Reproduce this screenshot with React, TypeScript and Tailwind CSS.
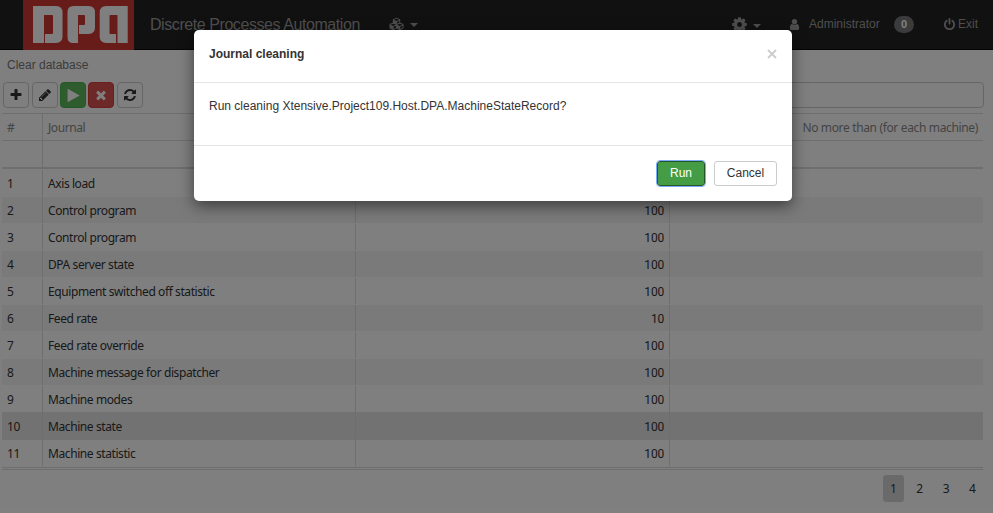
import React from "react";
import { FaCubes } from "react-icons/fa";

const ICONS = {
  plus: "M1600 736v192q0 40-28 68t-68 28h-416v416q0 40-28 68t-68 28h-192q-40 0-68-28t-28-68v-416h-416q-40 0-68-28t-28-68v-192q0-40 28-68t68-28h416v-416q0-40 28-68t68-28h192q40 0 68 28t28 68v416h416q40 0 68 28t28 68z",
  times: "M1490 1322q0 40-28 68l-136 136q-28 28-68 28t-68-28l-294-294-294 294q-28 28-68 28t-68-28l-136-136q-28-28-28-68t28-68l294-294-294-294q-28-28-28-68t28-68l136-136q28-28 68-28t68 28l294 294 294-294q28-28 68-28t68 28l136 136q28 28 28 68t-28 68l-294 294 294 294q28 28 28 68z",
  pencil: "M491 1536l91-91-235-235-91 91v107h128v128h107zm523-928q0-22-22-22-10 0-17 7l-542 542q-7 7-7 17 0 22 22 22 10 0 17-7l542-542q7-7 7-17zm-54-192l416 416-832 832h-416v-416zm683 96q0 53-37 90l-166 166-416-416 166-165q36-38 90-38 53 0 91 38l235 234q37 39 37 91z",
  play: "M1576 927l-1328 738q-23 13-39.5 3t-16.5-36v-1472q0-26 16.5-36t39.5 3l1328 738q23 13 23 31t-23 31z",
  refresh: "M1639 1056q0 5-1 7-64 268-268 434.5t-478 166.5q-146 0-282.5-55t-243.5-157l-129 129q-19 19-45 19t-45-19-19-45v-448q0-26 19-45t45-19h448q26 0 45 19t19 45-19 45l-137 137q71 66 161 102t187 36q134 0 250-65t186-179q11-17 53-117 8-23 30-23h192q13 0 22.5 9.5t9.5 22.5zm25-800v448q0 26-19 45t-45 19h-448q-26 0-45-19t-19-45 19-45l138-138q-148-137-349-137-134 0-250 65t-186 179q-11 17-53 117-8 23-30 23h-199q-13 0-22.5-9.5t-9.5-22.5v-7q65-268 270-434.5t480-166.5q146 0 284 55.5t245 156.5l130-129q19-19 45-19t45 19 19 45z",
  cog: "M1152 896q0-106-75-181t-181-75-181 75-75 181 75 181 181 75 181-75 75-181zm512-109v222q0 12-8 23t-20 13l-185 28q-19 54-39 91 35 50 107 138 10 12 10 25t-9 23q-27 37-99 108t-94 71q-12 0-26-9l-138-108q-44 23-91 38-16 136-29 186-7 28-36 28h-222q-14 0-24.5-8.5t-11.5-21.5l-28-184q-49-16-90-37l-141 107q-10 9-25 9-14 0-25-11-126-114-165-168-7-10-7-23 0-12 8-23 15-21 51-66.5t54-70.5q-27-50-41-99l-183-27q-13-2-21-12.5t-8-23.5v-222q0-12 8-23t19-13l186-28q14-46 39-92-40-57-107-138-10-12-10-24 0-10 9-23 26-36 98.5-107.5t94.5-71.5q13 0 26 10l138 107q44-23 91-38 16-136 29-186 7-28 36-28h222q14 0 24.5 8.5t11.5 21.5l28 184q49 16 90 37l142-107q9-9 24-9 13 0 25 10 129 119 165 170 7 8 7 22 0 12-8 23-15 21-51 66.5t-54 70.5q26 50 41 98l183 28q13 2 21 12.5t8 23.5z",
  power: "M1664 896q0 156-61 298t-164 245-245 164-298 61-298-61-245-164-164-245-61-298q0-182 80.5-343t226.5-270q43-32 95.5-25t83.5 50q32 42 24.5 94.5t-49.5 84.5q-98 74-151.5 181t-53.5 228q0 104 40.5 198.5t109.5 163.5 163.5 109.5 198.5 40.5 198.5-40.5 163.5-109.5 109.5-163.5 40.5-198.5q0-121-53.5-228t-151.5-181q-42-32-49.5-84.5t24.5-94.5q31-43 84-50t95 25q146 109 226.5 270t80.5 343zm-640-768v640q0 52-38 90t-90 38-90-38-38-90v-640q0-52 38-90t90-38 90 38 38 90z",
  user: "M1536 1399q0 109-62.5 187t-150.5 78h-854q-88 0-150.5-78t-62.5-187q0-85 8.5-160.5t31.5-152 58.5-131 94-89 134.5-34.5q131 128 313 128t313-128q76 0 134.5 34.5t94 89 58.5 131 31.5 152 8.5 160.5zm-256-887q0 159-112.5 271.5t-271.5 112.5-271.5-112.5-112.5-271.5 112.5-271.5 271.5-112.5 271.5 112.5 112.5 271.5z",
};

function Icon({ name, className }: { name: keyof typeof ICONS; className: string }) {
  return (
    <svg viewBox="0 0 1792 1792" fill="currentColor" className={"shrink-0 " + className}>
      <path d={ICONS[name]} />
    </svg>
  );
}

function Caret({ className = "" }: { className?: string }) {
  return <span className={"h-0 w-0 border-x-4 border-t-4 border-x-transparent border-t-current " + className} />;
}

function Logo() {
  return (
    <svg viewBox="0 0 111 50" className="ml-[23px] h-[50px] w-[111px] shrink-0">
      <rect width="111" height="50" fill="#cf3832" />
      <g fill="#fff">
        <path d="M10 6h23q6.500 0 6.500 6.500v24q0 6.500-6.500 6.500H22V34h7q1 0 1-1V16q0-1-1-1h-8v28H10z" />
        <path d="M44.500 12q0-6 6-6h15q6.500 0 6.500 6.500v15q0 6.500-6.500 6.500H56V25h5q1 0 1-1v-8q0-1-1-1h-6v28h-5q-5.500 0-5.500-6z" />
        <path d="M76.700 12.500q0-6.500 6.500-6.500h21.500v37H94.500V15h-7q-1 0-1 1v17q0 1 1 1H93v9h-9.800q-6.500 0-6.500-6.500z" />
      </g>
    </svg>
  );
}

const ROWS: [string, string][] = [
  ["Axis load", "100"],
  ["Control program", "100"],
  ["Control program", "100"],
  ["DPA server state", "100"],
  ["Equipment switched off statistic", "100"],
  ["Feed rate", "10"],
  ["Feed rate override", "100"],
  ["Machine message for dispatcher", "100"],
  ["Machine modes", "100"],
  ["Machine state", "100"],
  ["Machine statistic", "100"],
];

const SELECTED = 9;

function rowColors(i: number) {
  if (i === SELECTED) return "border-[#e5e5e5] bg-[#e5e5e5]";
  if (i === SELECTED - 1) return "border-[#e5e5e5]";
  return i % 2 ? "border-white bg-[#f5f5f5]" : "border-white";
}

const GRID = "grid grid-cols-[40px_313px_314px_1fr]";
const CELL = "flex items-center border-l border-[#ddd]";

function ToolButton({ className, children }: { className: string; children: React.ReactNode }) {
  return <button className={"flex h-[26px] w-[26px] items-center justify-center rounded border " + className}>{children}</button>;
}

function Header() {
  return (
    <header className="flex h-[50px] border-b border-[#080808] bg-[#222] text-xs text-[#9d9d9d]">
      <Logo />
      <span className="ml-4 w-[239px] whitespace-nowrap pt-[14px] text-base leading-[22px] tracking-[-0.43px]">Discrete Processes Automation</span>
      <div className="mt-[18px] flex h-3 items-center">
        <FaCubes className="h-[14px] w-[15px]" />
        <Caret className="ml-[6px] mt-px" />
      </div>
      <div className="ml-auto flex h-[48px] items-center pr-[14px]">
        <Icon name="cog" className="h-[17px] w-[17px]" />
        <Caret className="ml-[5px] mt-1" />
        <Icon name="user" className="ml-[27px] h-[13px] w-[13px]" />
        <span className="ml-2 w-[72px] whitespace-nowrap">Administrator</span>
        <span className="ml-[13px] flex h-[17px] w-5 items-center justify-center rounded-full bg-[#777] text-[11px] font-bold text-white">0</span>
        <Icon name="power" className="ml-[29px] h-[13px] w-[13px]" />
        <span className="ml-[2px] w-[21px] whitespace-nowrap">Exit</span>
      </div>
    </header>
  );
}

function Modal() {
  return (
    <div className="absolute left-[194px] top-[30px] flex h-[171px] w-[598px] flex-col rounded-[5px] bg-white text-xs text-[#333] shadow-[0_5px_15px_rgba(0,0,0,0.5)]">
      <div className="flex h-[53px] items-center justify-between border-b border-[#e5e5e5] px-[15px] pb-1">
        <h4 className="font-bold">Journal cleaning</h4>
        <svg viewBox="0 0 10 10" className="h-[10px] w-[10px]" stroke="#ccc" strokeWidth="1.800"><path d="M1 1l8 8M9 1l-8 8" /></svg>
      </div>
      <div className="h-[62px] px-[15px] pt-[14px] leading-[18px]">
        Run cleaning Xtensive.Project109.Host.DPA.MachineStateRecord?
      </div>
      <div className="flex flex-1 justify-end gap-[9px] border-t border-[#e5e5e5] px-[15px] pt-[15px]">
        <button className="h-[25px] w-[48px] rounded-[3px] border border-[#255625] bg-[#449d44] pb-px text-white outline-1 outline-[#7daafa]">Run</button>
        <button className="h-[25px] w-[63px] rounded-[3px] border border-[#ccc] pb-px">Cancel</button>
      </div>
    </div>
  );
}

export default function App() {
  return (
    <div className="relative h-[513px] w-[993px] overflow-hidden bg-white font-['Liberation_Sans',Arial,sans-serif]">
      <Header />
      <main>
        <h1 className="h-8 pl-[7px] pt-[6px] text-xs leading-[18px] text-[#777]">Clear database</h1>
        <div className="flex h-[31px] gap-[2px] pl-[3px] pr-[9px] text-[#333]">
          <ToolButton className="border-[#ccc]"><Icon name="plus" className="h-[14px] w-[14px]" /></ToolButton>
          <ToolButton className="ml-px border-[#ccc]"><Icon name="pencil" className="h-[14px] w-[14px]" /></ToolButton>
          <ToolButton className="border-[#4cae4c] bg-[#5cb85c] text-white"><Icon name="play" className="h-[15px] w-[15px]" /></ToolButton>
          <ToolButton className="border-[#d43f3a] bg-[#d9534f] text-white"><Icon name="times" className="h-[14px] w-[14px]" /></ToolButton>
          <ToolButton className="ml-px border-[#ccc]"><Icon name="refresh" className="h-[14px] w-[14px]" /></ToolButton>
          <div className="ml-[80px] h-[26px] flex-1 rounded border border-[#ccc]" />
        </div>
        <section className="ml-[2px] w-[981px] border-t border-[#ddd] font-['Noto_Sans',sans-serif] text-xs tracking-[-0.41px] text-[#333]">
          <div className={GRID + " h-[27px] border-b border-[#ddd] text-[#888]"}>
            <span className="flex items-center pl-[5px] pt-[2px]">#</span>
            <span className={CELL + " pl-[5px] pt-[2px]"}>Journal</span>
            <span className={CELL} />
            <span className={CELL + " justify-end pr-[5px] pt-[2px] tracking-[-0.35px]"}>No more than (for each machine)</span>
          </div>
          <div className={GRID + " h-[28px] border-b-2 border-[#ddd]"}>
            <span /><span className={CELL} /><span className={CELL} /><span className={CELL} />
          </div>
          <div className="border-b border-[#ddd] pt-px">
            {ROWS.map(([name, value], i) => (
              <div key={i} className={GRID + " h-[27px] border-b " + rowColors(i)}>
                <span className="flex items-center pl-[5px] pt-px">{i + 1}</span>
                <span className={CELL + " pl-[5px] pt-px"}>{name}</span>
                <span className={CELL + " justify-end pr-[5px] pt-px font-[Roboto] tracking-[-0.2px]"}>{value}</span>
                <span className={CELL} />
              </div>
            ))}
          </div>
          <div className="mt-px border-t border-[#ddd]" />
        </section>
        <nav className="mt-[5px] flex justify-end gap-[5.4px] pr-[10px] font-['Noto_Sans',sans-serif] text-xs text-[#333]">
          {[1, 2, 3, 4].map((n) => (
            <span key={n} className={"flex h-[27px] w-[21px] items-center justify-center rounded-[3px] " + (n === 1 ? "bg-[#d5d5d5]" : "")}>{n}</span>
          ))}
        </nav>
      </main>
      <div className="absolute inset-0 bg-black/50" />
      <Modal />
    </div>
  );
}
